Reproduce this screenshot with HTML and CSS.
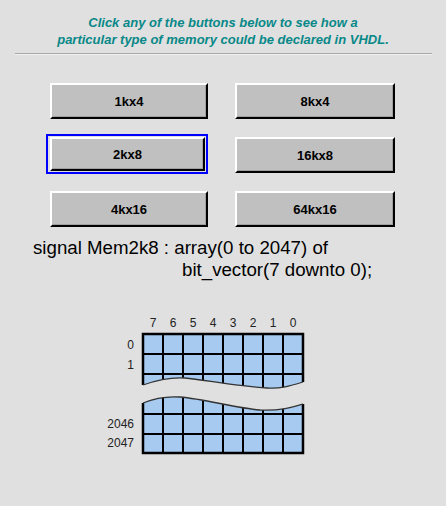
FILE: index.html
```html
<!DOCTYPE html>
<html>
<head>
<meta charset="utf-8">
<link rel="stylesheet" href="styles.css">
</head>
<body>
<div class="page">
  <div class="intro">Click any of the buttons below to see how a<br>particular type of memory could be declared in VHDL.</div>
  <div class="rule"></div>
  <div class="buttons">
    <div class="cell"><div class="btn">1kx4</div></div>
    <div class="cell"><div class="btn">8kx4</div></div>
    <div class="cell focus"><div class="btn">2kx8</div></div>
    <div class="cell"><div class="btn">16kx8</div></div>
    <div class="cell"><div class="btn">4kx16</div></div>
    <div class="cell"><div class="btn">64kx16</div></div>
  </div>
  <div class="code">
    <div class="l1">signal Mem2k8 : array(0 to 2047) of</div>
    <div class="l2">bit_vector(7 downto 0);</div>
  </div>
  <svg class="diagram" width="220" height="150" viewBox="0 0 220 150">
    <defs>
      <clipPath id="topc"><path d="M48,24 H208 V72 C195,76 185,79 172,78 C140,76 110,70 90,68 C75,67 62,70 48,75 Z"/></clipPath>
      <clipPath id="botc"><path d="M48,93 C60,88 70,86 85,87 C110,89 140,98 165,100 C185,101 198,97 208,94 V143 H48 Z"/></clipPath>
    </defs>
    <g class="labels">
      <text x="58" y="17">7</text><text x="78" y="17">6</text><text x="98" y="17">5</text><text x="118" y="17">4</text>
      <text x="138" y="17">3</text><text x="158" y="17">2</text><text x="178" y="17">1</text><text x="198" y="17">0</text>
    </g>
    <g class="rowlabels">
      <text x="39" y="39">0</text><text x="39" y="59">1</text>
      <text x="39" y="118">2046</text><text x="39" y="137">2047</text>
    </g>
    <g clip-path="url(#topc)">
      <rect x="48" y="24" width="160" height="60" fill="#a6caf0"/>
      <g stroke="#000" stroke-width="2">
        <line x1="48" y1="44" x2="208" y2="44"/><line x1="48" y1="64" x2="208" y2="64"/>
        <line x1="68" y1="24" x2="68" y2="84"/><line x1="88" y1="24" x2="88" y2="84"/>
        <line x1="108" y1="24" x2="108" y2="84"/><line x1="128" y1="24" x2="128" y2="84"/>
        <line x1="148" y1="24" x2="148" y2="84"/><line x1="168" y1="24" x2="168" y2="84"/>
        <line x1="188" y1="24" x2="188" y2="84"/>
      </g>
    </g>
    <path d="M48,75 V24 H208 V72" fill="none" stroke="#000" stroke-width="2.5"/>
    <path d="M48,75 C62,70 75,67 90,68 C110,70 140,76 172,78 C185,79 195,76 208,72" fill="none" stroke="#333" stroke-width="1.3"/>
    <g clip-path="url(#botc)">
      <rect x="48" y="84" width="160" height="60" fill="#a6caf0"/>
      <g stroke="#000" stroke-width="2">
        <line x1="48" y1="104" x2="208" y2="104"/><line x1="48" y1="124" x2="208" y2="124"/>
        <line x1="68" y1="84" x2="68" y2="144"/><line x1="88" y1="84" x2="88" y2="144"/>
        <line x1="108" y1="84" x2="108" y2="144"/><line x1="128" y1="84" x2="128" y2="144"/>
        <line x1="148" y1="84" x2="148" y2="144"/><line x1="168" y1="84" x2="168" y2="144"/>
        <line x1="188" y1="84" x2="188" y2="144"/>
      </g>
    </g>
    <path d="M48,93 V143 H208 V94" fill="none" stroke="#000" stroke-width="2.5"/>
    <path d="M48,93 C60,88 70,86 85,87 C110,89 140,98 165,100 C185,101 198,97 208,94" fill="none" stroke="#333" stroke-width="1.3"/>
  </svg>
</div>
</body>
</html>
```
FILE: styles.css
```css
html, body {
  margin: 0;
  padding: 0;
  background: #e0e0e0;
}
.page {
  width: 446px;
  height: 506px;
  font-family: "Liberation Sans", Arial, sans-serif;
}
.intro {
  padding-top: 14px;
  text-align: center;
  color: #088888;
  font-weight: bold;
  font-style: italic;
  font-size: 13px;
  line-height: 17px;
}
.rule {
  margin: 5px 14px 0 15px;
  height: 1px;
  background: #a8a8a8;
  border-bottom: 1px solid #f0f0f0;
}
.buttons {
  display: grid;
  grid-template-columns: 162px 164px;
  grid-auto-rows: 36px;
  column-gap: 23px;
  row-gap: 18px;
  margin: 28px 0 0 46px;
}
.cell {
  padding-left: 4px;
  display: flex;
}
.btn {
  flex: 1;
  box-sizing: border-box;
  background: #c0c0c0;
  border-top: 2px solid #fff;
  border-left: 2px solid #fff;
  border-right: 2px solid #000;
  border-bottom: 2px solid #000;
  box-shadow: inset -1px -1px 0 #a0a0a0;
  display: flex;
  align-items: center;
  justify-content: center;
  font-size: 13px;
  font-weight: bold;
  color: #000;
}
.cell.focus {
  box-sizing: border-box;
  height: 40px;
  margin: -3px 0 -1px 0;
  border: 2px solid #0000ff;
  padding: 1px 1px 1px 2px;
}
.code {
  margin-top: 10px;
  padding-left: 33px;
  font-size: 18.7px;
  line-height: 22px;
  color: #000;
}
.code .l2 {
  padding-left: 149px;
}
.diagram {
  display: block;
  margin: 29px 0 0 95px;
}
.labels text {
  font-family: "Liberation Sans", Arial, sans-serif;
  font-size: 12px;
  fill: #222;
  text-anchor: middle;
}
.rowlabels text {
  font-family: "Liberation Sans", Arial, sans-serif;
  font-size: 12px;
  fill: #222;
  text-anchor: end;
}
```
